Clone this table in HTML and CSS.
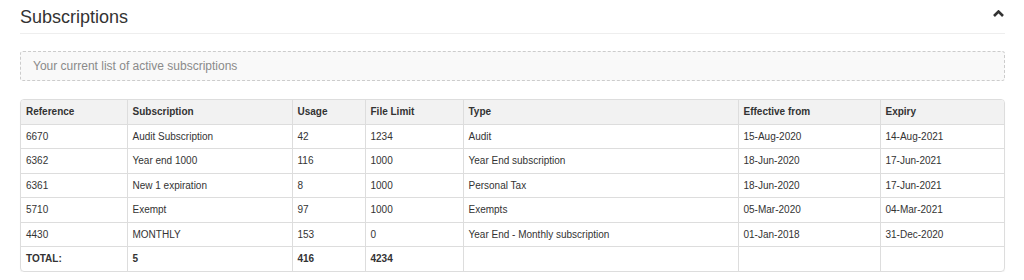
FILE: index.html
```html
<!DOCTYPE html>
<html>
<head>
<meta charset="utf-8">
<link rel="stylesheet" href="styles.css">
</head>
<body>
<div class="page">
  <div class="header">
    <h2 class="title">Subscriptions</h2>
    <svg class="chevron" width="11" height="7" viewBox="0 0 11 7"><path d="M1 6 L5.5 1.5 L10 6" fill="none" stroke="#333" stroke-width="2.6" stroke-linejoin="miter"/></svg>
  </div>
  <div class="note">Your current list of active subscriptions</div>
  <div class="table-wrap">
    <table class="subs">
      <colgroup>
        <col class="c1"><col class="c2"><col class="c3"><col class="c4"><col class="c5"><col class="c6"><col class="c7">
      </colgroup>
      <thead>
        <tr><th>Reference</th><th>Subscription</th><th>Usage</th><th>File Limit</th><th>Type</th><th>Effective from</th><th>Expiry</th></tr>
      </thead>
      <tbody>
        <tr><td>6670</td><td>Audit Subscription</td><td>42</td><td>1234</td><td>Audit</td><td>15-Aug-2020</td><td>14-Aug-2021</td></tr>
        <tr><td>6362</td><td>Year end 1000</td><td>116</td><td>1000</td><td>Year End subscription</td><td>18-Jun-2020</td><td>17-Jun-2021</td></tr>
        <tr><td>6361</td><td>New 1 expiration</td><td>8</td><td>1000</td><td>Personal Tax</td><td>18-Jun-2020</td><td>17-Jun-2021</td></tr>
        <tr><td>5710</td><td>Exempt</td><td>97</td><td>1000</td><td>Exempts</td><td>05-Mar-2020</td><td>04-Mar-2021</td></tr>
        <tr><td>4430</td><td>MONTHLY</td><td>153</td><td>0</td><td>Year End - Monthly subscription</td><td>01-Jan-2018</td><td>31-Dec-2020</td></tr>
        <tr class="total"><td>TOTAL:</td><td>5</td><td>416</td><td>4234</td><td></td><td></td><td></td></tr>
      </tbody>
    </table>
  </div>
</div>
</body>
</html>
```
FILE: styles.css
```css
html, body {
  margin: 0;
  padding: 0;
  background: #fff;
}
body {
  font-family: "Liberation Sans", Arial, sans-serif;
  color: #333;
}
.page {
  width: 985px;
  margin-left: 20px;
}
.header {
  display: flex;
  align-items: flex-start;
  justify-content: space-between;
  border-bottom: 1px solid #eee;
  height: 33px;
}
.title {
  margin: 0;
  padding-top: 6px;
  font-size: 18px;
  font-weight: normal;
  line-height: 22px;
  color: #333;
}
.chevron {
  margin-top: 10px;
  margin-right: 1px;
}
.note {
  margin-top: 17px;
  height: 30px;
  box-sizing: border-box;
  border: 1px dashed #ccc;
  border-radius: 3px;
  background: #f9f9f9;
  padding: 0 12px;
  font-size: 12px;
  line-height: 29px;
  color: #8a8a8a;
}
.table-wrap {
  margin-top: 18px;
  border: 1px solid #ddd;
  border-radius: 4px;
  overflow: hidden;
  box-shadow: 0 1px 1px rgba(0,0,0,0.05);
}
.subs {
  width: 100%;
  border-collapse: collapse;
  table-layout: fixed;
  font-size: 10px;
}
.c1 { width: 106px; }
.c2 { width: 165px; }
.c3 { width: 73px; }
.c4 { width: 98px; }
.c5 { width: 275px; }
.c6 { width: 142px; }
.c7 { width: auto; }
.subs th, .subs td {
  text-align: left;
  padding: 4px 5px;
  line-height: 15.5px;
  border-left: 1px solid #ddd;
  border-top: 1px solid #ddd;
  white-space: nowrap;
}
.subs th:first-child, .subs td:first-child { border-left: none; }
.subs thead th {
  border-top: none;
  background: #f2f2f2;
  font-weight: bold;
}
.subs tr.total td {
  font-weight: bold;
}
```
